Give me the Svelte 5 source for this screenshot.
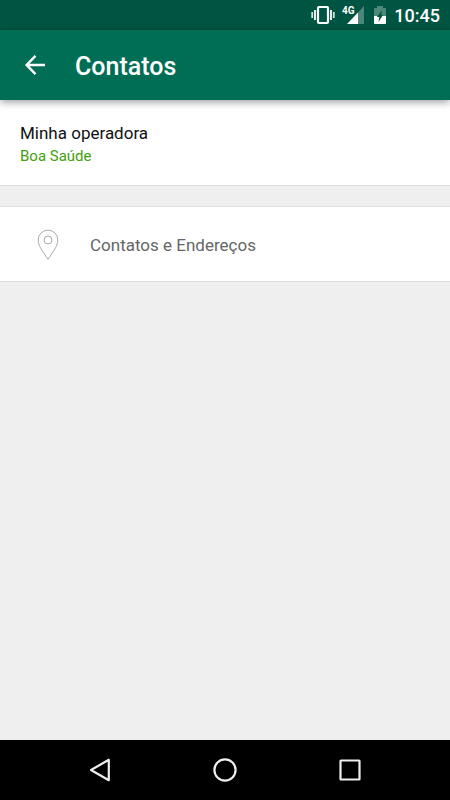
<script>
  let provider = 'Boa Saúde';
  let time = '10:45';
</script>

<div class="screen">
  <div class="status-bar">
    <svg class="vibrate" width="24" height="20" viewBox="0 0 24 20" role="img" aria-label="Vibrar">
      <rect x="7" y="2" width="10" height="16" rx="1" fill="none" stroke="#fff" stroke-width="2.2" />
      <path d="M4 5v10M20 5v10" stroke="#e4eeea" stroke-width="2" />
      <path d="M1.2 7v6M22.8 7v6" stroke="#d3e2dd" stroke-width="1.8" />
    </svg>
    <svg class="signal" width="24" height="20" viewBox="0 0 24 20" role="img" aria-label="4G">
      <path d="M17 7.5L23 1v18h-6z" fill="#4d877a" />
      <path d="M17 7.5V19H6z" fill="#fff" />
      <path d="M0 0h12v11H0z" fill="#005542" />
      <text class="network" x="1" y="9">4G</text>
    </svg>
    <svg class="battery" width="14" height="20" viewBox="0 0 14 20" role="img" aria-label="Bateria carregando">
      <path d="M4 1h6v2h2q1 0 1 1v7H1V4q0-1 1-1h2z" fill="#4d877a" />
      <path d="M1 11h12v7q0 1-1 1H2q-1 0-1-1z" fill="#fff" />
      <path d="M9 5.5L8.2 10H10l-4.5 7 .8-5H3.8z" fill="#005542" />
    </svg>
    <span class="time">{time}</span>
  </div>

  <header class="toolbar">
    <button class="back" aria-label="Voltar">
      <svg width="30" height="30" viewBox="0 0 30 30">
        <path d="M15.5 5.8L6.6 15l8.9 9.2M6.6 15H25" fill="none" stroke="#fff" stroke-width="2.4" />
      </svg>
    </button>
    <h1>Contatos</h1>
  </header>

  <main>
    <section class="provider">
      <h2>Minha operadora</h2>
      <p>{provider}</p>
    </section>

    <button class="row">
      <svg width="22" height="32" viewBox="0 0 22 32">
        <path d="M11 30.5C8 25 1.2 18 1.2 11A9.7 9.7 0 0 1 20.8 11C20.8 18 14 25 11 30.5z" />
        <circle cx="11" cy="11" r="4" />
      </svg>
      <span>Contatos e Endereços</span>
    </button>
  </main>

  <nav class="nav-bar">
    <button aria-label="Voltar">
      <svg width="26" height="26" viewBox="0 0 26 26">
        <path d="M21.8 2.8v20.4L4 13z" />
      </svg>
    </button>
    <button aria-label="Início">
      <svg width="26" height="26" viewBox="0 0 26 26">
        <circle cx="13" cy="13" r="10.6" />
      </svg>
    </button>
    <button aria-label="Recentes">
      <svg width="26" height="26" viewBox="0 0 26 26">
        <rect x="3.5" y="3.5" width="19" height="19" rx="0.5" />
      </svg>
    </button>
  </nav>
</div>

<style>
  :global(body) {
    margin: 0;
  }

  .screen {
    display: flex;
    flex-direction: column;
    min-height: 100vh;
    background: #efefef;
    font-family: Roboto, sans-serif;
  }

  button {
    padding: 0;
    border: 0;
    background: none;
    font: inherit;
    cursor: pointer;
  }

  svg {
    display: block;
    flex: none;
  }

  /* Status bar */
  .status-bar {
    display: flex;
    align-items: center;
    justify-content: flex-end;
    height: 30px;
    padding-right: 10px;
    background: #005542;
    color: #fff;
  }

  .signal {
    margin-left: 6px;
  }

  .battery {
    margin-left: 8px;
  }

  .network {
    fill: #fff;
    font-size: 10px;
    font-weight: 700;
    font-family: Roboto, sans-serif;
  }

  .time {
    margin-left: 7px;
    font-size: 18px;
    font-weight: 500;
    line-height: 30px;
    padding-top: 2px;
  }

  /* Toolbar */
  .toolbar {
    position: relative;
    display: flex;
    align-items: center;
    height: 70px;
    padding: 0 20px;
    background: #006e54;
    box-shadow: 0 2px 8px rgba(0, 0, 0, 0.4);
  }

  .toolbar h1 {
    margin: 0 0 0 25px;
    padding-top: 3px;
    color: #fff;
    font-size: 25px;
    font-weight: 500;
    line-height: 30px;
  }

  /* Content */
  main {
    flex: 1;
  }

  .provider {
    padding: 22px 20px 18px;
    border-bottom: 1px solid #dcdcdc;
    background: #fff;
  }

  .provider h2 {
    margin: 0;
    color: #111;
    font-size: 17px;
    font-weight: 400;
    line-height: 23px;
  }

  .provider p {
    margin: 0;
    color: #45a00c;
    font-size: 15px;
    line-height: 22px;
  }

  .row {
    display: flex;
    align-items: center;
    width: 100%;
    height: 76px;
    margin-top: 20px;
    padding: 1px 37px 0;
    border-top: 1px solid #e2e2e2;
    border-bottom: 1px solid #dcdcdc;
    background: #fff;
    text-align: left;
  }

  .row svg {
    fill: none;
    stroke: #aaa;
    stroke-width: 1;
  }

  .row span {
    margin-left: 31px;
    color: #666;
    font-size: 17px;
    line-height: 24px;
  }

  /* Navigation bar */
  .nav-bar {
    display: flex;
    align-items: center;
    justify-content: center;
    gap: 99px;
    height: 60px;
    background: #000;
  }

  .nav-bar svg {
    fill: none;
    stroke: #eee;
    stroke-width: 2.2;
    stroke-linejoin: round;
  }
</style>
